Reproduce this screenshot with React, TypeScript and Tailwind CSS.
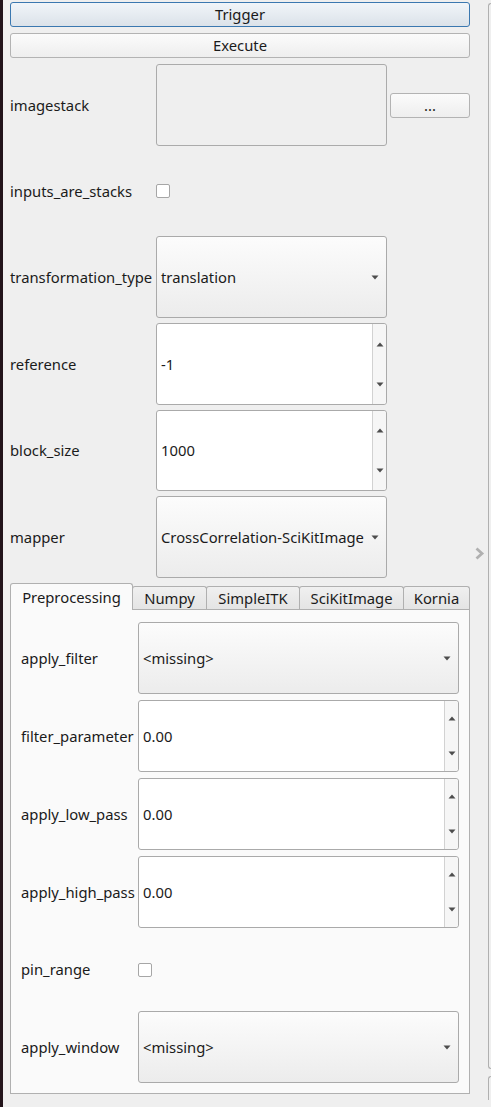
import type { ReactNode } from "react";

const UpArrow = () => (
  <svg width="8" height="5" viewBox="0 0 8 5">
    <path d="M0.5 4.5 L4 0.5 L7.5 4.5 Z" fill="#4d4d4d" />
  </svg>
);

const DownArrow = () => (
  <svg width="8" height="5" viewBox="0 0 8 5">
    <path d="M0.5 0.5 L7.5 0.5 L4 4.5 Z" fill="#4d4d4d" />
  </svg>
);

const ComboBox = ({ value, className }: { value: string; className: string }) => (
  <div
    className={`flex items-center rounded-[3px] border border-[#aaaaaa] bg-gradient-to-b from-[#fcfcfc] to-[#ececec] pr-[7px] pl-[4px] ${className}`}
  >
    <span className="flex-1 whitespace-nowrap">{value}</span>
    <DownArrow />
  </div>
);

const SpinBox = ({ value, className }: { value: string; className: string }) => (
  <div className={`flex rounded-[3px] border border-[#aaaaaa] bg-white ${className}`}>
    <div className="flex flex-1 items-center pl-[4px]">{value}</div>
    <div className="flex w-[14px] flex-col items-center justify-around rounded-r-[3px] border-l border-[#d2d2d2] bg-[#f6f6f6]">
      <UpArrow />
      <DownArrow />
    </div>
  </div>
);

const CheckBox = () => (
  <div className="h-[14px] w-[14px] rounded-[2px] border border-[#a6a6a6] bg-white" />
);

const Row = ({ label, children, height, labelWidth }: { label: string; children: ReactNode; height: string; labelWidth: string }) => (
  <div className={`flex items-center ${height}`}>
    <div className={`shrink-0 whitespace-nowrap ${labelWidth}`}>{label}</div>
    {children}
  </div>
);

const tabs = [
  { name: "Preprocessing", width: "w-[123px]" },
  { name: "Numpy", width: "w-[75px]" },
  { name: "SimpleITK", width: "w-[94px]" },
  { name: "SciKitImage", width: "w-[105px]" },
  { name: "Kornia", width: "w-[67px]" },
];

export default function App() {
  return (
    <div className="flex h-[1107px] w-[491px] overflow-hidden bg-[#efefef] font-['Noto_Sans',sans-serif] text-[14.8px] text-[#1b1b1b]">
      <div className="w-[3px] shrink-0 bg-[#22131a]" />

      <div className="flex w-[467px] shrink-0 flex-col pt-[2px] pl-[7px]">
        <button className="h-[25px] rounded-[3px] border border-[#3b78b0] bg-gradient-to-b from-[#f1f5f9] to-[#dbe2e9]">
          Trigger
        </button>
        <button className="mt-[6px] h-[25px] rounded-[3px] border border-[#b3b3b3] bg-gradient-to-b from-[#fbfbfb] to-[#eeeeee]">
          Execute
        </button>

        <div className="mt-[6px] flex flex-col gap-[5px]">
          <Row label="imagestack" height="h-[82px]" labelWidth="w-[146px]">
            <div className="h-full w-[231px] rounded-[3px] border border-[#ababab]" />
            <button className="ml-[3px] h-[25px] w-[80px] rounded-[3px] border border-[#b3b3b3] bg-gradient-to-b from-[#fbfbfb] to-[#eeeeee]">
              ...
            </button>
          </Row>
          <Row label="inputs_are_stacks" height="h-[80px]" labelWidth="w-[146px]">
            <CheckBox />
          </Row>
          <Row label="transformation_type" height="h-[82px]" labelWidth="w-[146px]">
            <ComboBox value="translation" className="h-full w-[231px]" />
          </Row>
          <Row label="reference" height="h-[82px]" labelWidth="w-[146px]">
            <SpinBox value="-1" className="h-full w-[231px]" />
          </Row>
          <Row label="block_size" height="h-[81px]" labelWidth="w-[146px]">
            <SpinBox value="1000" className="h-full w-[231px]" />
          </Row>
          <Row label="mapper" height="h-[82px]" labelWidth="w-[146px]">
            <ComboBox value="CrossCorrelation-SciKitImage" className="h-full w-[231px]" />
          </Row>
        </div>

        <div className="mt-[5px] flex h-[26px] items-end">
          {tabs.map((tab, i) =>
            i === 0 ? (
              <div
                key={tab.name}
                className={`relative z-10 -mb-px flex h-[27px] items-center justify-center rounded-t-[3px] border-x border-t border-[#b0b0b0] bg-[#fafafa] ${tab.width}`}
              >
                {tab.name}
              </div>
            ) : (
              <div
                key={tab.name}
                className={`-ml-px flex h-[23px] items-center justify-center rounded-t-[3px] border-x border-t border-[#b0b0b0] bg-gradient-to-b from-[#f0f0f0] to-[#e4e4e4] ${tab.width}`}
              >
                {tab.name}
              </div>
            )
          )}
        </div>
        <div className="flex flex-col gap-[6px] border border-[#b0b0b0] bg-[#fafafa] px-[10px] pt-[12px] pb-[10px]">
          <Row label="apply_filter" height="h-[72px]" labelWidth="w-[117px]">
            <ComboBox value="<missing>" className="h-full flex-1" />
          </Row>
          <Row label="filter_parameter" height="h-[72px]" labelWidth="w-[117px]">
            <SpinBox value="0.00" className="h-full flex-1" />
          </Row>
          <Row label="apply_low_pass" height="h-[72px]" labelWidth="w-[117px]">
            <SpinBox value="0.00" className="h-full flex-1" />
          </Row>
          <Row label="apply_high_pass" height="h-[72px]" labelWidth="w-[117px]">
            <SpinBox value="0.00" className="h-full flex-1" />
          </Row>
          <Row label="pin_range" height="h-[71px]" labelWidth="w-[117px]">
            <CheckBox />
          </Row>
          <Row label="apply_window" height="h-[72px]" labelWidth="w-[117px]">
            <ComboBox value="<missing>" className="h-full flex-1" />
          </Row>
        </div>
      </div>

      <div className="flex w-[18px] shrink-0 items-center justify-center">
        <svg width="11" height="13" viewBox="0 0 11 13">
          <path d="M2.5 1.5 L8 6.5 L2.5 11.5" fill="none" stroke="#b0b0b0" strokeWidth="2.8" />
        </svg>
      </div>

      <div className="flex w-[3px] shrink-0 flex-col pt-[3px]">
        <div className="h-[1066px] rounded-l-[3px] border-y border-l border-[#b0b0b0]" />
        <div className="mt-[7px] h-[24px] rounded-tl-[3px] border-t border-l border-[#b0b0b0]" />
      </div>
    </div>
  );
}
